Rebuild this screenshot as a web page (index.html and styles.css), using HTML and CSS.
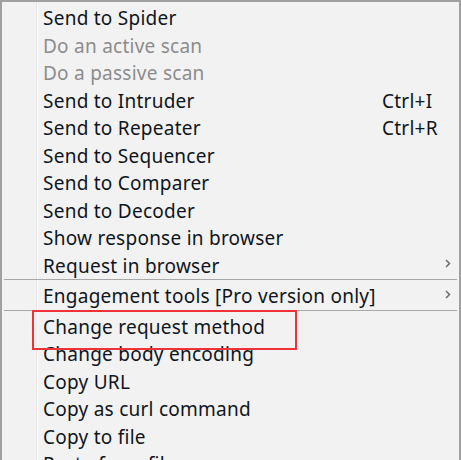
FILE: index.html
```html
<!DOCTYPE html>
<html>
<head>
<meta charset="utf-8">
<link rel="stylesheet" href="styles.css">
</head>
<body>
<div class="menu">
  <div class="gutter"></div>
  <ul class="items">
    <li class="item"><span class="label">Send to Spider</span></li>
    <li class="item disabled"><span class="label">Do an active scan</span></li>
    <li class="item disabled"><span class="label">Do a passive scan</span></li>
    <li class="item"><span class="label">Send to Intruder</span><span class="shortcut">Ctrl+I</span></li>
    <li class="item"><span class="label">Send to Repeater</span><span class="shortcut">Ctrl+R</span></li>
    <li class="item"><span class="label">Send to Sequencer</span></li>
    <li class="item"><span class="label">Send to Comparer</span></li>
    <li class="item"><span class="label">Send to Decoder</span></li>
    <li class="item"><span class="label">Show response in browser</span></li>
    <li class="item"><span class="label">Request in browser</span><span class="shortcut"></span><svg class="arrow" width="6" height="9" viewBox="0 0 6 9"><path d="M1 1 L4.5 4.5 L1 8" fill="none" stroke="#6d6d6d" stroke-width="1.5"/></svg></li>
    <li class="sep"></li>
    <li class="item"><span class="label">Engagement tools [Pro version only]</span><span class="shortcut"></span><svg class="arrow" width="6" height="9" viewBox="0 0 6 9"><path d="M1 1 L4.5 4.5 L1 8" fill="none" stroke="#6d6d6d" stroke-width="1.5"/></svg></li>
    <li class="sep"></li>
    <li class="item"><span class="label">Change request method</span></li>
    <li class="item"><span class="label">Change body encoding</span></li>
    <li class="item"><span class="label">Copy URL</span></li>
    <li class="item"><span class="label">Copy as curl command</span></li>
    <li class="item"><span class="label">Copy to file</span></li>
    <li class="item"><span class="label">Paste from file</span></li>
  </ul>
  <div class="highlight"></div>
</div>
</body>
</html>
```
FILE: styles.css
```css
html, body {
  margin: 0;
  padding: 0;
  background: #f2f2f2;
  overflow: hidden;
}

.menu {
  position: relative;
  width: 461px;
  height: 460px;
  overflow: hidden;
  box-sizing: border-box;
  background: #f2f2f2;
  border-top: 2px solid #a0a0a0;
  border-left: 2px solid #a0a0a0;
  border-right: 2px solid #a0a0a0;
  font-family: "Noto Sans", "Open Sans", sans-serif;
  font-size: 19px;
  letter-spacing: 0.25px;
  color: #0f1520;
}

.gutter {
  position: absolute;
  left: 34px;
  top: 0;
  bottom: 0;
  width: 1px;
  background: #e6e6e6;
  border-right: 1px solid #fafafa;
}

.items {
  list-style: none;
  margin: 0;
  padding: 2px 0 0 0;
  position: relative;
}

.item {
  display: grid;
  grid-template-columns: 339px 1fr 14px;
  align-items: center;
  box-sizing: border-box;
  height: 27.5px;
  line-height: 25.5px;
  padding-top: 2px;
  padding-left: 41px;
  white-space: nowrap;
}

.item.disabled {
  color: #8c8c8c;
}

.arrow {
  display: block;
  margin-top: -5px;
}

.sep {
  height: 3px;
  position: relative;
}

.sep::after {
  content: "";
  position: absolute;
  left: 2px;
  right: 2px;
  top: 0;
  height: 1px;
  background: #a8a8a8;
}

.highlight {
  position: absolute;
  left: 30px;
  top: 308px;
  width: 261px;
  height: 36px;
  border: 2px solid #ee3238;
}
```
